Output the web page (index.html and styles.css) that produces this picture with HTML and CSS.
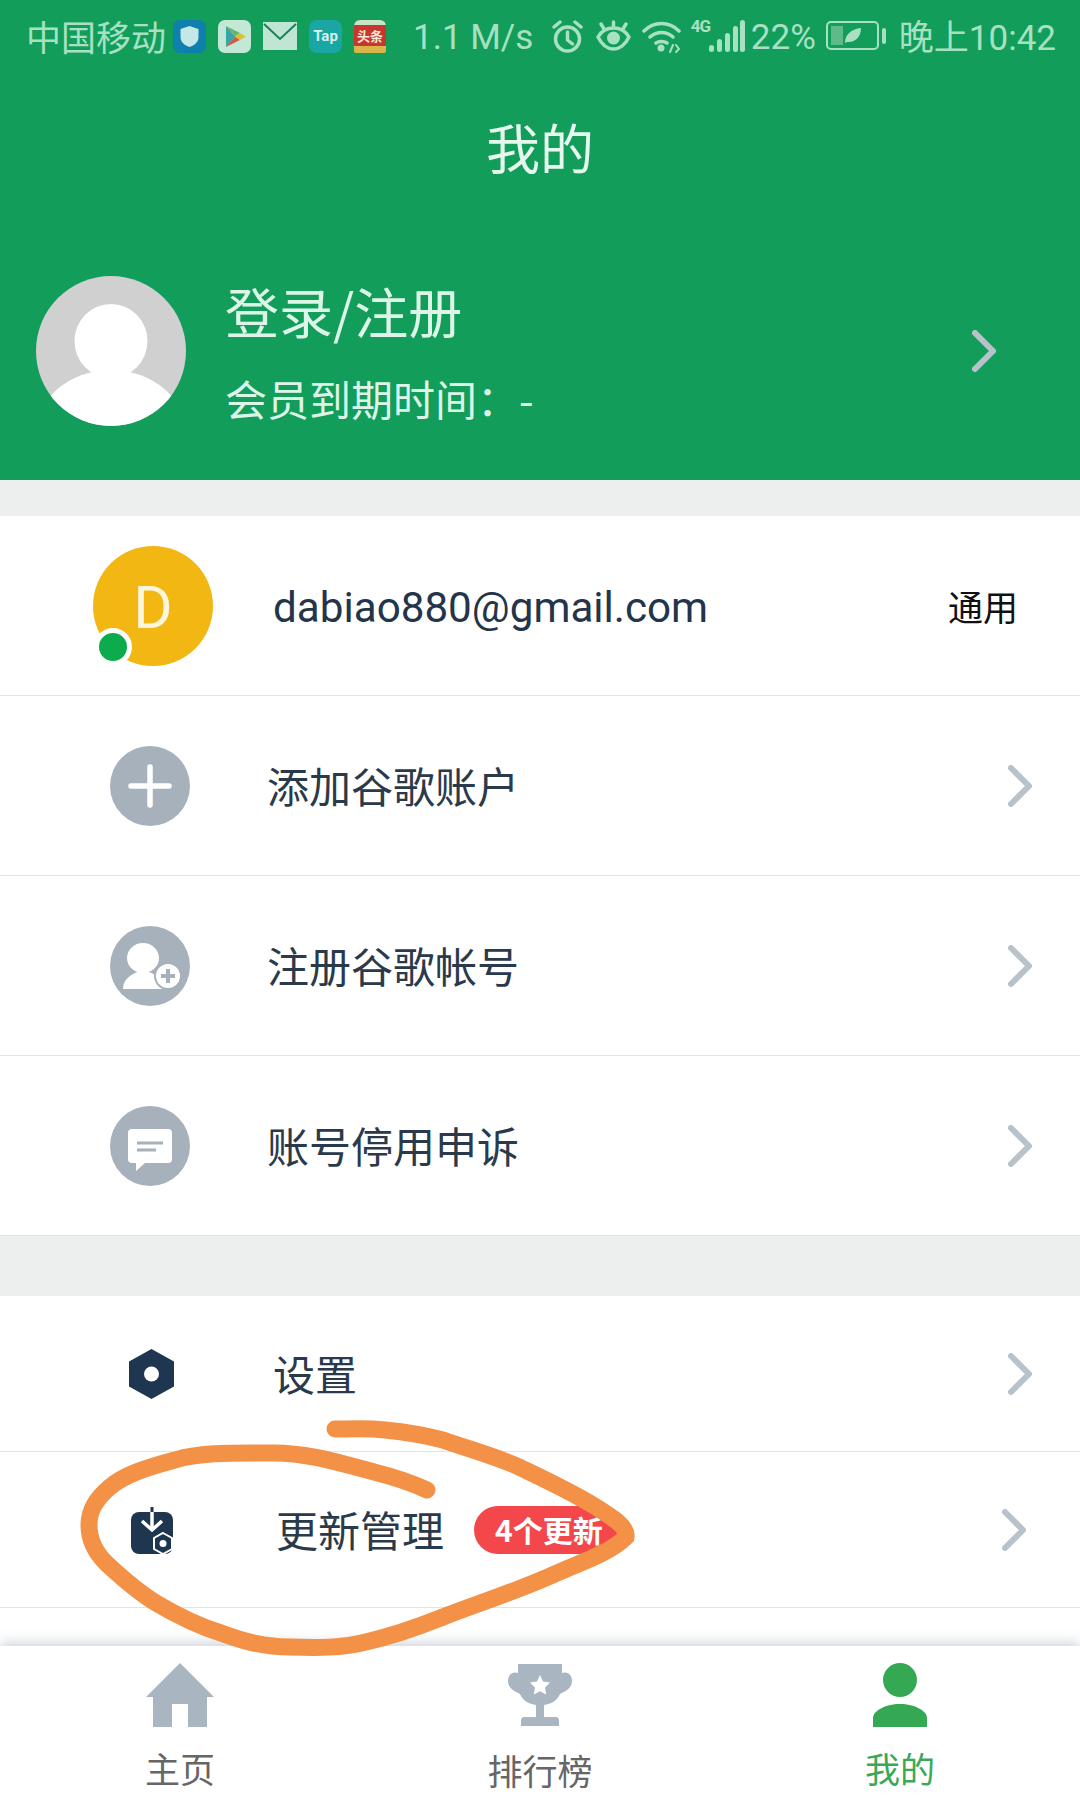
FILE: index.html
```html
<!DOCTYPE html>
<html lang="zh-CN">
<head>
    <meta charset="UTF-8">
    <title>我的</title>
    <link rel="stylesheet" href="styles.css">
</head>
<body>
<div class="page">
    <div class="header">
        <div class="status">
            <span class="carrier">中国移动</span>
            <div class="status-apps">
                <svg width="33" height="33" viewBox="0 0 33 33"><rect width="33" height="33" rx="7" fill="#0f7fae"/><path d="M16.500 6l9 3v8c0 5-4 8.500-9 10-5-1.500-9-5-9-10V9z" fill="#c4e8e6"/></svg>
                <svg width="33" height="33" viewBox="0 0 33 33"><rect width="33" height="33" rx="7" fill="#c3e9d6"/><path d="M8 6l9 10.500L8 27z" fill="#35a6a8"/><path d="M8 6l14 7-5 3.500z" fill="#6cb36b"/><path d="M8 27l14-7-5-3.500z" fill="#d2584c"/><path d="M22 13l6 3.500-6 3.500-5-3.500z" fill="#d8c23a"/></svg>
                <svg width="34" height="28" viewBox="0 0 34 28"><rect width="34" height="28" fill="#bfe6d2"/><path d="M1 2l16 15L33 2" fill="none" stroke="#17815a" stroke-width="2"/></svg>
                <svg width="33" height="33" viewBox="0 0 33 33"><rect width="33" height="33" rx="8" fill="#1aa6a2"/><text x="16.500" y="21" text-anchor="middle" class="tap-label">Tap</text></svg>
                <svg width="32" height="33" viewBox="0 0 32 33"><rect width="32" height="33" rx="6" fill="#c8e4c6"/><rect y="5" width="32" height="21" fill="#c9362f"/><rect y="26" width="32" height="7" rx="2" fill="#d9b54a"/><text x="16" y="21" text-anchor="middle" class="news-label">头条</text></svg>
            </div>
            <span class="speed">1.1 M/s</span>
            <div class="status-sys">
                <svg class="alarm" width="31" height="33" viewBox="0 0 31 33" fill="none" stroke="#a8e0c2" stroke-width="3.500" stroke-linecap="round"><circle cx="15.500" cy="19" r="12"/><path d="M15.500 12v8l5 4M2 7l6-5M29 7l-6-5"/></svg>
                <svg width="37" height="32" viewBox="0 0 37 32" fill="none" stroke="#a8e0c2" stroke-width="3.500" stroke-linecap="round"><path d="M3 17c4-7 9-9 15.500-9S30 10 34 17c-4 8-9 12-15.500 12S7 25 3 17z"/><circle cx="18.500" cy="18" r="6.500" fill="#a8e0c2" stroke="none"/><path d="M18.500 2v4M6 4l3 5M31 4l-3 5"/></svg>
                <svg width="39" height="33" viewBox="0 0 39 33" fill="none" stroke="#a8e0c2" stroke-width="3.500" stroke-linecap="round"><path d="M2 11c10-10 25-10 35 0M8 17c7-6 16-6 23 0M14 23c3-2 8-2 11 0"/><circle cx="19" cy="28" r="3.500" fill="#a8e0c2" stroke="none"/><path d="M28 32l3-7M34 25l3 4-3 3" stroke-width="2"/></svg>
                <div class="signal">
                    <span class="net">4G</span>
                    <svg width="36" height="33" viewBox="0 0 36 33" fill="#a8e0c2"><rect x="0" y="25" width="5" height="7" rx="2.500"/><rect x="8" y="19" width="5" height="13" rx="2.500"/><rect x="16" y="13" width="5" height="19" rx="2.500"/><rect x="24" y="6" width="5" height="26" rx="2.500"/><rect x="31" y="0" width="5" height="32" rx="2.500"/></svg>
                </div>
                <span class="speed">22%</span>
                <svg width="60" height="30" viewBox="0 0 60 30"><rect x="1" y="1" width="51" height="27" rx="4" fill="none" stroke="#a8e0c2" stroke-width="2"/><rect x="5" y="5" width="12" height="19" fill="#5dbb8b"/><path d="M19 22c0-9 7-14 16-15 0 9-6 15-14 14" fill="#a8e0c2"/><rect x="56" y="7" width="4" height="16" rx="2" fill="#a8e0c2"/></svg>
                <span class="clock">晚上10:42</span>
            </div>
        </div>
        <div class="title">我的</div>
        <div class="profile">
            <svg class="profile-pic" width="150" height="150" viewBox="0 0 150 150">
                <defs><clipPath id="pic"><circle cx="75" cy="75" r="75"/></clipPath></defs>
                <circle cx="75" cy="75" r="75" fill="#d0d0d0"/>
                <g clip-path="url(#pic)">
                    <ellipse cx="75" cy="164" rx="78" ry="70" fill="#fff"/>
                </g>
                <ellipse cx="75" cy="65" rx="36.500" ry="37" fill="#fff"/>
            </svg>
            <div class="profile-text">
                <div class="profile-name">登录/注册</div>
                <div class="profile-sub">会员到期时间：-</div>
            </div>
            <svg class="chevron chevron-top" width="24" height="42" viewBox="0 0 24 42"><path d="M3 3l18 18L3 39"/></svg>
        </div>
    </div>

    <div class="group group-first">
        <div class="row row-account">
            <div class="letter">
                <span class="letter-d">D</span>
                <span class="online"></span>
            </div>
            <span class="email">dabiao880@gmail.com</span>
            <span class="kind">通用</span>
        </div>
        <div class="row">
            <div class="slot">
                <svg class="round" width="80" height="80" viewBox="0 0 80 80"><circle cx="40" cy="40" r="40" fill="#a7b1bc"/><path d="M40 21v38M21 40h38" stroke="#fff" stroke-width="5.500" stroke-linecap="round"/></svg>
            </div>
            <span class="label">添加谷歌账户</span>
            <svg class="chevron" width="24" height="42" viewBox="0 0 24 42"><path d="M3 3l18 18L3 39"/></svg>
        </div>
        <div class="row">
            <div class="slot">
                <svg class="round" width="80" height="80" viewBox="0 0 80 80"><circle cx="40" cy="40" r="40" fill="#a7b1bc"/><ellipse cx="33" cy="32" rx="16" ry="15" fill="#fff"/><path d="M13 63c0-10 8-14 14-17h12c8 3 14 8 14 17z" fill="#fff"/><circle cx="58" cy="50" r="13" fill="#fff" stroke="#a7b1bc" stroke-width="2"/><path d="M58 43v14M51 50h14" stroke="#a7b1bc" stroke-width="4"/></svg>
            </div>
            <span class="label">注册谷歌帐号</span>
            <svg class="chevron" width="24" height="42" viewBox="0 0 24 42"><path d="M3 3l18 18L3 39"/></svg>
        </div>
        <div class="row">
            <div class="slot">
                <svg class="round" width="80" height="80" viewBox="0 0 80 80"><circle cx="40" cy="40" r="40" fill="#a7b1bc"/><path d="M22 23h36a4 4 0 0 1 4 4v26a4 4 0 0 1-4 4H35l-9 8v-8h-4a4 4 0 0 1-4-4V27a4 4 0 0 1 4-4z" fill="#fff"/><path d="M27 37h26M27 44h19" stroke="#a7b1bc" stroke-width="3"/></svg>
            </div>
            <span class="label">账号停用申诉</span>
            <svg class="chevron" width="24" height="42" viewBox="0 0 24 42"><path d="M3 3l18 18L3 39"/></svg>
        </div>
    </div>

    <div class="group group-second">
        <div class="row row-low">
            <div class="slot slot-settings">
                <svg width="45" height="50" viewBox="0 0 45 50"><path d="M22.500 0L45 12.500v25L22.500 50 0 37.500v-25z" fill="#1f3650"/><ellipse cx="22.500" cy="25" rx="7.500" ry="7.500" fill="#fff"/></svg>
            </div>
            <span class="label">设置</span>
            <svg class="chevron" width="24" height="42" viewBox="0 0 24 42"><path d="M3 3l18 18L3 39"/></svg>
        </div>
        <div class="row row-low">
            <div class="slot slot-update">
                <svg width="42" height="48" viewBox="0 0 42 48"><rect y="6" width="42" height="42" rx="8" fill="#1f3650"/><path d="M21 1v22" stroke="#1f3650" stroke-width="3"/><path d="M21 6v17M11 15l10 9 10-9" fill="none" stroke="#fff" stroke-width="3.500"/><path d="M32 27l9 5v11l-9 5-9-5V32z" fill="#1f3650" stroke="#fff" stroke-width="2"/><circle cx="32" cy="37.500" r="3.500" fill="#fff"/></svg>
            </div>
            <span class="label">更新管理</span>
            <span class="badge">4个更新</span>
            <svg class="chevron chevron-shift" width="24" height="42" viewBox="0 0 24 42"><path d="M3 3l18 18L3 39"/></svg>
        </div>
    </div>

    <div class="spacer"></div>

    <div class="tabs">
        <div class="tab">
            <svg width="68" height="64" viewBox="0 0 68 64"><path d="M34 0l34 34h-7v30H42V41H26v23H7V34H0z" fill="#a9b5c1"/></svg>
            <span>主页</span>
        </div>
        <div class="tab">
            <svg width="64" height="66" viewBox="0 0 64 66"><path d="M10 1h44v9c6-2 10 2 10 8 0 7-6 10-12 13-3 7-9 10-16 11v12h12c2 0 3 2 3 4v5H13v-5c0-2 1-4 3-4h12V42c-7-1-13-4-16-11C6 28 0 25 0 18c0-6 4-10 10-8z" fill="#a9b5c1"/><path d="M32 12l3 6.500 7 1-5 5 1.200 7-6.200-3.300-6.200 3.300 1.200-7-5-5 7-1z" fill="#fff"/></svg>
            <span>排行榜</span>
        </div>
        <div class="tab tab-on">
            <svg width="54" height="64" viewBox="0 0 54 64"><circle cx="27" cy="17" r="17" fill="#34a853"/><path d="M0 64V55c0-7 12-14 27-14s27 7 27 14v9z" fill="#34a853"/></svg>
            <span>我的</span>
        </div>
    </div>

    <!-- marker scribble someone drew on the screenshot -->
    <svg class="scribble" width="1080" height="1805" viewBox="0 0 1080 1805">
        <path d="M427 1490 C410 1482 394 1477 374 1472 C340 1463 305 1452 270 1453 C235 1453 200 1452 175 1460 C145 1468 124 1475 110 1487 C96 1499 89 1510 89 1525 C89 1540 95 1552 106 1563 C122 1578 138 1592 156 1603 C178 1616 198 1626 221 1633 C245 1642 265 1647 290 1647 C318 1648 342 1648 366 1642 C392 1636 418 1627 443 1617 C482 1602 520 1590 557 1573 C582 1562 610 1553 626 1537 C628 1527 612 1517 596 1507 C572 1492 546 1480 519 1467 C495 1456 468 1449 443 1440 C424 1435 405 1432 385 1430 C368 1428 350 1429 335 1429"/>
    </svg>
</div>
</body>
</html>
```

FILE: styles.css
```css
* {
    box-sizing: border-box;
}

body {
    margin: 0;
    background: #fff;
    font-family: "Noto Sans CJK SC", Roboto, sans-serif;
}

.page {
    position: relative;
    width: 1080px;
    height: 1805px;
    overflow: hidden;
    display: flex;
    flex-direction: column;
    background: #edeeee;
}

/* green top part */
.header {
    height: 480px;
    background: #129d5a;
}

.status {
    height: 72px;
    padding: 0 24px 0 26px;
    display: flex;
    align-items: center;
    color: #a8e0c2;
}

.carrier {
    margin-top: -2px;
    margin-right: 7px;
    font-size: 35px;
}

.status-apps {
    display: flex;
    align-items: center;
    gap: 12px;
}

.tap-label {
    font: bold 15px Roboto, sans-serif;
    fill: #d5f2ee;
}

.news-label {
    font: bold 13px "Noto Sans CJK SC", sans-serif;
    fill: #fbe9d8;
}

.speed,
.clock {
    font-family: Roboto, "Noto Sans CJK SC", sans-serif;
    font-size: 35px;
    white-space: nowrap;
}

.speed {
    margin-top: 2px;
}

.status > .speed {
    margin-left: 27px;
}

.status-sys {
    margin-left: auto;
    display: flex;
    align-items: center;
    gap: 10px;
}

.alarm {
    margin-right: 2px;
}

.signal {
    position: relative;
    width: 54px;
    margin-right: -4px;
    display: flex;
    justify-content: flex-end;
}

.net {
    position: absolute;
    left: 0;
    top: -4px;
    font: bold 17px Roboto, sans-serif;
    letter-spacing: -1px;
}

.clock {
    margin-top: -3px;
    margin-left: 3px;
}

.title {
    height: 150px;
    line-height: 150px;
    text-align: center;
    font-size: 54px;
    color: #e6f7ee;
}

.profile {
    margin-top: 54px;
    padding: 0 84px 0 36px;
    display: flex;
    align-items: center;
}

.profile-text {
    margin-left: 39px;
    color: #dcf5e8;
}

.profile-name {
    font-size: 54px;
    line-height: 70px;
}

.profile-sub {
    margin-top: 24px;
    font-size: 42px;
    line-height: 56px;
}

.chevron {
    margin-left: auto;
    margin-right: 48px;
    flex: none;
}

.chevron path {
    fill: none;
    stroke: #b8c2ca;
    stroke-width: 6;
    stroke-linecap: round;
    stroke-linejoin: round;
}

.chevron-top {
    margin-right: 0;
}

.chevron-shift {
    margin-right: 54px;
}

/* list */
.group {
    background: #fff;
}

.group-first {
    margin-top: 36px;
}

.group-second {
    margin-top: 60px;
}

.row {
    height: 180px;
    display: flex;
    align-items: center;
    border-bottom: 1px solid #e2e3e4;
}

.row-low {
    height: 156px;
}

.slot {
    width: 267px;
    padding-left: 110px;
    flex: none;
    display: flex;
}

.slot-settings {
    width: 273px;
    padding-left: 129px;
}

.slot-update {
    width: 276px;
    padding-left: 131px;
}

.label {
    margin-top: -1px;
    font-size: 42px;
    line-height: 56px;
    color: #2a3a4a;
}

.row-account {
    padding: 0 62px 0 93px;
}

.letter {
    position: relative;
    width: 120px;
    height: 120px;
    border-radius: 50%;
    background: #f2b712;
    display: flex;
    align-items: center;
    justify-content: center;
    flex: none;
}

.letter-d {
    margin-top: 4px;
    font-family: Roboto, sans-serif;
    font-size: 60px;
    color: #fdf6dd;
}

.online {
    position: absolute;
    left: 1px;
    top: 82px;
    width: 38px;
    height: 38px;
    border-radius: 50%;
    background: #0cac4c;
    border: 5px solid #fff;
}

.email {
    margin-top: 4px;
    margin-left: 60px;
    font-family: Roboto, sans-serif;
    font-size: 42.2px;
    color: #24344a;
}

.kind {
    margin-left: auto;
    font-size: 35px;
    color: #111;
}

.badge {
    margin-left: 30px;
    width: 144px;
    height: 48px;
    padding-left: 21px;
    border-radius: 24px;
    background: #f4474b;
    color: #fff;
    font-size: 30px;
    font-weight: bold;
    line-height: 46px;
    white-space: nowrap;
}

.spacer {
    flex: 1;
    background: #fff;
}

/* bottom tabs */
.tabs {
    position: relative;
    height: 159px;
    padding-top: 17px;
    display: flex;
    background: #fff;
    box-shadow: 0 -3px 12px rgba(110, 130, 150, .35);
}

.tab {
    flex: 1;
    display: flex;
    flex-direction: column;
    align-items: center;
    font-size: 35px;
    color: #666;
}

.tab svg {
    flex: none;
}

.tab span {
    margin-top: 16px;
    line-height: 50px;
    white-space: nowrap;
}

.tab-on {
    color: #3aa857;
}

.scribble {
    position: absolute;
    left: 0;
    top: 0;
}

.scribble path {
    fill: none;
    stroke: #f39146;
    stroke-width: 17;
    stroke-linecap: round;
}
```
